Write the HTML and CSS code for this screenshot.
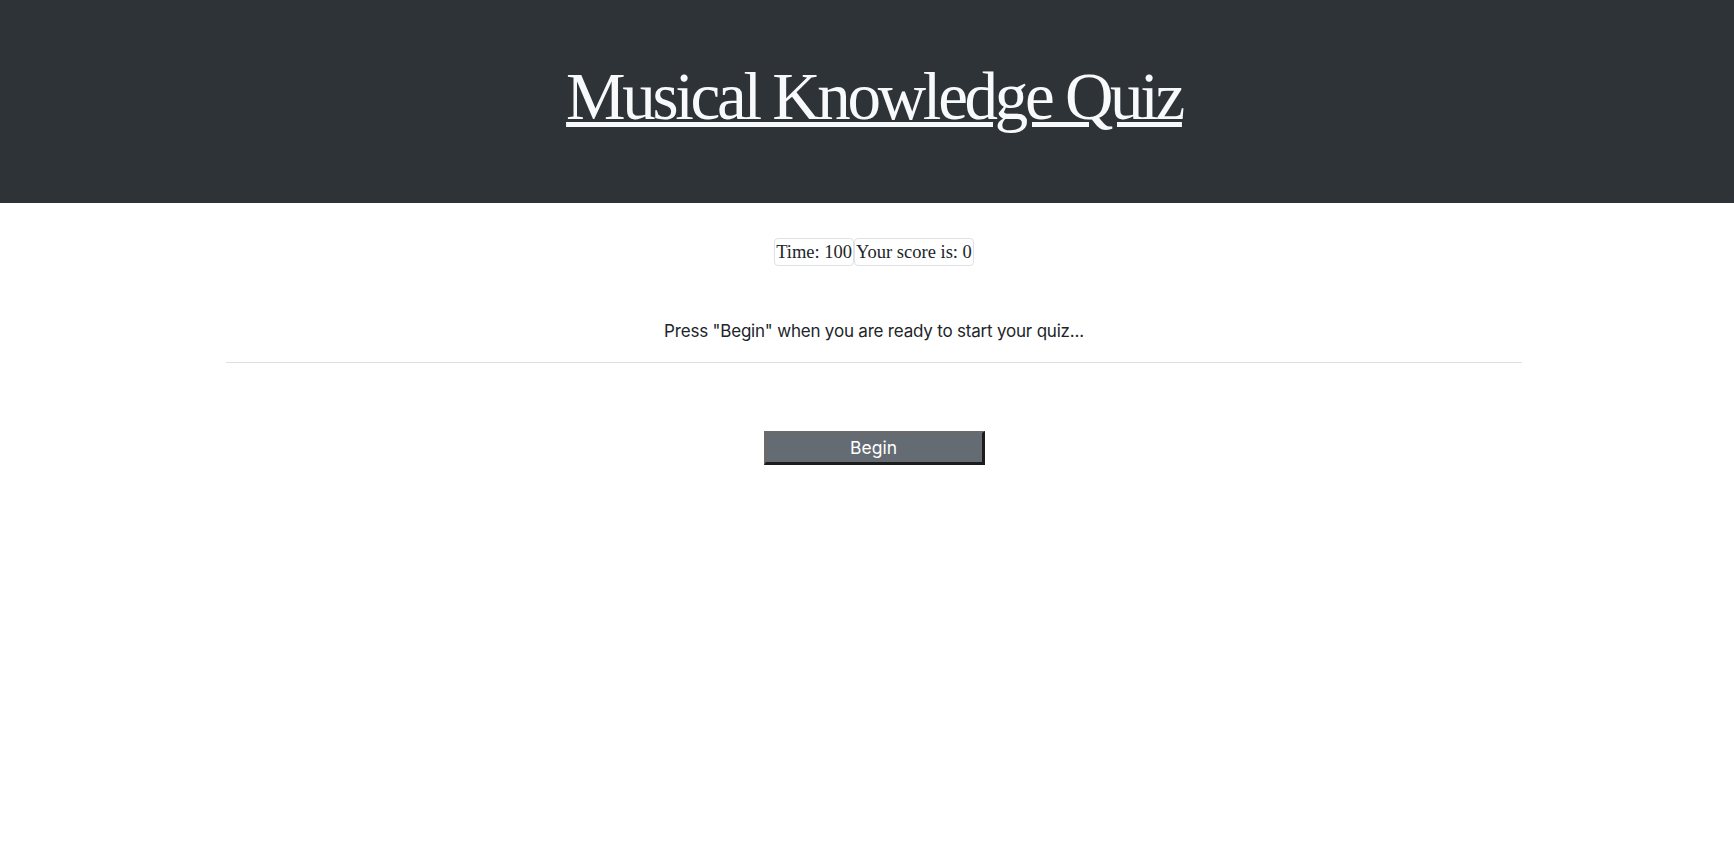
FILE: index.html
```html
<!DOCTYPE html>
<html lang="en">
<head>
<meta charset="utf-8">
<title>Musical Knowledge Quiz</title>
<link rel="stylesheet" href="styles.css">
</head>
<body>
<header class="site-header">
  <h1 class="site-title">Musical Knowledge Quiz</h1>
</header>
<main class="container">
  <div class="stats">
    <span class="stat">Time: 100</span><span class="stat">Your score is: 0</span>
  </div>
  <p class="prompt">Press "Begin" when you are ready to start your quiz...</p>
  <hr class="divider">
  <div class="actions">
    <button class="begin-btn" type="button">Begin</button>
  </div>
</main>
</body>
</html>
```
FILE: styles.css
```css
html, body {
  margin: 0;
  padding: 0;
  background: #ffffff;
}
body {
  font-family: "Inter", "Noto Sans", sans-serif;
  color: #212529;
}
.site-header {
  background: #2e3338;
  height: 203px;
  box-sizing: border-box;
  display: flex;
  align-items: flex-start;
  justify-content: center;
  padding: 51px 0 0 14px;
}
.site-title {
  margin: 0;
  font-family: "Liberation Serif", "Times New Roman", serif;
  font-weight: 400;
  font-size: 67px;
  line-height: 90px;
  letter-spacing: -3.3px;
  color: #f8f9fa;
  text-decoration: underline;
  text-decoration-thickness: 5px;
  text-underline-offset: 3px;
}
.container {
  width: 1296px;
  padding: 0 12px;
  margin-left: calc(50% - 653px);
}
.stats {
  display: flex;
  justify-content: center;
  padding-top: 35px;
}
.stat {
  font-family: "Liberation Serif", "Times New Roman", serif;
  font-size: 18.5px;
  line-height: 26px;
  border: 1px solid #dee2e6;
  border-radius: 4px;
  padding: 0 1px;
  color: #212529;
}
.prompt {
  margin: 53px 0 0;
  text-align: center;
  font-size: 17px;
  letter-spacing: -0.2px;
  line-height: 24px;
  color: #212529;
}
.divider {
  margin: 19px 0 0;
  border: 0;
  border-top: 1px solid #dedfe0;
}
.actions {
  display: flex;
  justify-content: center;
  padding-top: 68px;
}
.begin-btn {
  width: 221px;
  height: 34px;
  background: #646b73;
  color: #ffffff;
  font-family: "Inter", "Noto Sans", sans-serif;
  font-size: 17.5px;
  border-style: solid;
  border-width: 2px 3px 3px 2px;
  border-color: #6e6a66 #1c1c1c #1c1c1c #6e6a66;
  padding: 0;
}
```
